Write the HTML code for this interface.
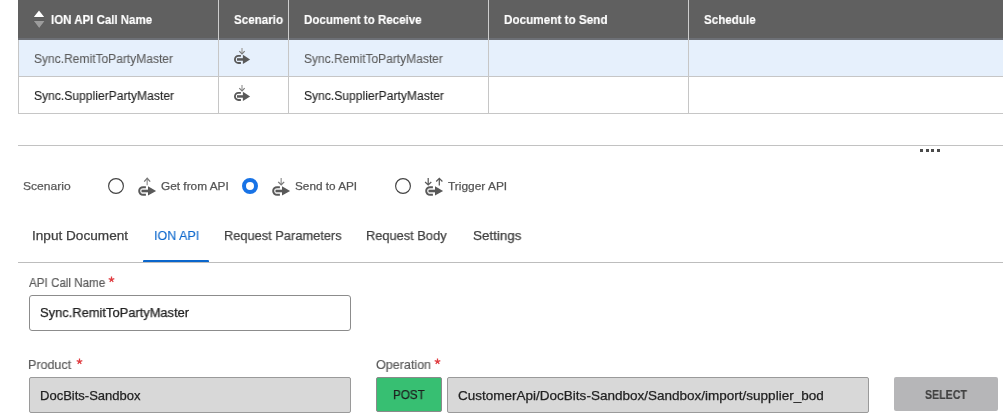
<!DOCTYPE html>
<html><head><meta charset="utf-8">
<style>
html,body{margin:0;padding:0;background:#fff;}
body{width:1003px;height:419px;position:relative;overflow:hidden;font-family:"Liberation Sans",sans-serif;}
.a{position:absolute;}
.t{position:absolute;white-space:nowrap;line-height:20px;transform-origin:0 0;will-change:transform;-webkit-text-stroke:0.3px currentColor;}
.ln{position:absolute;}
</style></head>
<body>


<!-- table header -->
<div class="ln" style="left:18px;top:0;width:985px;height:38px;background:#606060;"></div>
<div class="ln" style="left:18px;top:38px;width:985px;height:2px;background:#6d7076;"></div>
<div class="ln" style="left:218px;top:0;width:1px;height:40px;background:#cdcdcd;"></div>
<div class="ln" style="left:288px;top:0;width:1px;height:40px;background:#cdcdcd;"></div>
<div class="ln" style="left:488px;top:0;width:1px;height:40px;background:#cdcdcd;"></div>
<div class="ln" style="left:688px;top:0;width:1px;height:40px;background:#cdcdcd;"></div>
<svg class="a" style="left:32px;top:9px" width="14" height="20" viewBox="0 0 14 20">
<path d="M1.8 8.1 L7 1.5 L12.2 8.1 Z" fill="#fff" stroke="#555" stroke-width="0.7" paint-order="stroke"/>
<path d="M1.9 12.1 L7.2 19 L12.5 12.1 Z" fill="#9c9c9c" stroke="#555" stroke-width="0.7" paint-order="stroke"/>
</svg>

<!-- rows -->
<div class="ln" style="left:19px;top:40px;width:984px;height:36px;background:#e6f0fc;"></div>
<div class="ln" style="left:18px;top:40px;width:1px;height:74px;background:#c6c6c6;"></div>
<div class="ln" style="left:218px;top:40px;width:1px;height:74px;background:#c6c6c6;"></div>
<div class="ln" style="left:288px;top:40px;width:1px;height:74px;background:#c6c6c6;"></div>
<div class="ln" style="left:488px;top:40px;width:1px;height:74px;background:#c6c6c6;"></div>
<div class="ln" style="left:688px;top:40px;width:1px;height:74px;background:#c6c6c6;"></div>
<div class="ln" style="left:18px;top:76px;width:985px;height:1px;background:#c6c6c6;"></div>
<div class="ln" style="left:18px;top:113px;width:985px;height:1px;background:#c6c6c6;"></div>

<!-- separator + dots -->
<div class="ln" style="left:18px;top:145px;width:985px;height:1px;background:#c2c2c2;"></div>
<div class="ln" style="left:920px;top:149px;width:3px;height:3px;background:#4a4a4a;"></div>
<div class="ln" style="left:926px;top:149px;width:3px;height:3px;background:#4a4a4a;"></div>
<div class="ln" style="left:931px;top:149px;width:3px;height:3px;background:#4a4a4a;"></div>
<div class="ln" style="left:937px;top:149px;width:3px;height:3px;background:#4a4a4a;"></div>

<!-- scenario -->
<svg class="a" style="left:107px;top:177px" width="18" height="18" viewBox="0 0 18 18"><circle cx="9" cy="9" r="7.4" fill="#fff" stroke="#444" stroke-width="1.15"/></svg>
<svg class="a" style="left:241px;top:177px" width="18" height="18" viewBox="0 0 18 18"><circle cx="9" cy="9" r="6" fill="#fff" stroke="#1873e6" stroke-width="4"/></svg>
<svg class="a" style="left:394px;top:177px" width="18" height="18" viewBox="0 0 18 18"><circle cx="9" cy="9" r="7.4" fill="#fff" stroke="#444" stroke-width="1.15"/></svg>

<!-- tabs -->
<div class="ln" style="left:18px;top:262px;width:985px;height:1px;background:#bdbdbd;"></div>
<div class="ln" style="left:143px;top:260px;width:66px;height:2px;background:#0a66cc;border-radius:1px 1px 0 0;"></div>

<!-- form -->
<div class="ln" style="left:29px;top:295px;width:320px;height:34px;border:1px solid #8c8c8c;border-radius:3px;background:#fff;"></div>
<div class="ln" style="left:29px;top:377px;width:320px;height:34px;border:1px solid #9a9a9a;border-radius:2px;background:#d8d8d8;"></div>
<div class="ln" style="left:376px;top:377px;width:64px;height:33px;border:1px solid #8a8a8a;border-radius:2px;background:#37bf72;"></div>
<div class="ln" style="left:447px;top:377px;width:420px;height:34px;border:1px solid #9a9a9a;border-radius:2px;background:#d8d8d8;"></div>
<div class="ln" style="left:894px;top:377px;width:104px;height:34px;border-radius:2px;background:#b6b6b8;"></div>


<svg class="a" style="left:107.6px;top:275.6px" width="7" height="7" viewBox="0 0 7 7"><path d="M3.5 3.55 L3.50 0.60 M3.5 3.55 L6.31 2.64 M3.5 3.55 L5.23 5.94 M3.5 3.55 L1.77 5.94 M3.5 3.55 L0.69 2.64" stroke="#e03c40" stroke-width="1.25" stroke-linecap="butt"/><circle cx="3.5" cy="3.55" r="0.9" fill="#e03c40"/></svg>
<svg class="a" style="left:75.5px;top:357.6px" width="7" height="7" viewBox="0 0 7 7"><path d="M3.5 3.55 L3.50 0.60 M3.5 3.55 L6.31 2.64 M3.5 3.55 L5.23 5.94 M3.5 3.55 L1.77 5.94 M3.5 3.55 L0.69 2.64" stroke="#e03c40" stroke-width="1.25" stroke-linecap="butt"/><circle cx="3.5" cy="3.55" r="0.9" fill="#e03c40"/></svg>
<svg class="a" style="left:433.8px;top:357.6px" width="7" height="7" viewBox="0 0 7 7"><path d="M3.5 3.55 L3.50 0.60 M3.5 3.55 L6.31 2.64 M3.5 3.55 L5.23 5.94 M3.5 3.55 L1.77 5.94 M3.5 3.55 L0.69 2.64" stroke="#e03c40" stroke-width="1.25" stroke-linecap="butt"/><circle cx="3.5" cy="3.55" r="0.9" fill="#e03c40"/></svg>
<svg class="a" style="left:0;top:0" width="1003" height="419" viewBox="0 0 1003 419">
<path d="M240.90 55.93 H238.45 A3.52 3.52 0 0 0 238.45 62.97 H240.90" fill="none" stroke="#595959" stroke-width="1.85"/>
<path d="M237.00 59.45 H243.50" stroke="#595959" stroke-width="2.5"/>
<path d="M242.90 54.80 L250.10 59.45 L242.90 64.00 Z" fill="#595959"/>
<path d="M242.00 48.00 V53.40" stroke="#a8a8a8" stroke-width="1.4"/>
<path d="M239.30 51.10 L242.00 53.80 L244.70 51.10" fill="none" stroke="#7a7a7a" stroke-width="1.2"/>
<path d="M240.90 92.93 H238.45 A3.52 3.52 0 0 0 238.45 99.97 H240.90" fill="none" stroke="#595959" stroke-width="1.85"/>
<path d="M237.00 96.45 H243.50" stroke="#595959" stroke-width="2.5"/>
<path d="M242.90 91.80 L250.10 96.45 L242.90 101.00 Z" fill="#595959"/>
<path d="M242.00 85.00 V90.40" stroke="#a8a8a8" stroke-width="1.4"/>
<path d="M239.30 88.10 L242.00 90.80 L244.70 88.10" fill="none" stroke="#7a7a7a" stroke-width="1.2"/>
<path d="M145.90 187.15 H143.05 A3.85 3.85 0 0 0 143.05 194.85 H145.90" fill="none" stroke="#595959" stroke-width="2.0"/>
<path d="M141.50 191.00 H149.00" stroke="#595959" stroke-width="2.6"/>
<path d="M148.00 186.20 L156.10 191.00 L148.00 195.60 Z" fill="#595959"/>
<path d="M147.20 185.30 V178.60" stroke="#a8a8a8" stroke-width="1.5"/>
<path d="M144.20 181.60 L147.20 178.30 L150.20 181.60" fill="none" stroke="#7a7a7a" stroke-width="1.3"/>
<path d="M279.90 187.15 H277.05 A3.85 3.85 0 0 0 277.05 194.85 H279.90" fill="none" stroke="#595959" stroke-width="2.0"/>
<path d="M275.50 191.00 H283.00" stroke="#595959" stroke-width="2.6"/>
<path d="M282.00 186.20 L290.10 191.00 L282.00 195.60 Z" fill="#595959"/>
<path d="M281.20 177.90 V184.40" stroke="#a8a8a8" stroke-width="1.5"/>
<path d="M278.20 181.90 L281.20 184.80 L284.20 181.90" fill="none" stroke="#7a7a7a" stroke-width="1.3"/>
<path d="M432.90 187.15 H430.05 A3.85 3.85 0 0 0 430.05 194.85 H432.90" fill="none" stroke="#595959" stroke-width="2.0"/>
<path d="M428.50 191.00 H436.00" stroke="#595959" stroke-width="2.6"/>
<path d="M435.00 186.20 L443.10 191.00 L435.00 195.60 Z" fill="#595959"/>
<path d="M428.20 178.00 V184.60 M425.10 182.00 L428.20 184.90 L431.30 182.00" fill="none" stroke="#5a5a5a" stroke-width="1.25"/>
<path d="M439.30 185.50 V178.50 M436.20 181.50 L439.30 178.30 L442.40 181.50" fill="none" stroke="#5a5a5a" stroke-width="1.25"/>
</svg>
<div class="t" id="h1" style="left:51.05px;top:10.32px;font-size:13.23px;font-weight:bold;-webkit-text-stroke:0.15px currentColor;color:#fff;transform:scaleX(0.8690);">ION API Call Name</div>
<div class="t" id="h2" style="left:233.75px;top:10.32px;font-size:13.23px;font-weight:bold;-webkit-text-stroke:0.15px currentColor;color:#fff;transform:scaleX(0.8789);">Scenario</div>
<div class="t" id="h3" style="left:303.75px;top:10.32px;font-size:13.23px;font-weight:bold;-webkit-text-stroke:0.15px currentColor;color:#fff;transform:scaleX(0.8754);">Document to Receive</div>
<div class="t" id="h4" style="left:503.74px;top:10.32px;font-size:13.23px;font-weight:bold;-webkit-text-stroke:0.15px currentColor;color:#fff;transform:scaleX(0.8868);">Document to Send</div>
<div class="t" id="h5" style="left:704.05px;top:10.32px;font-size:13.23px;font-weight:bold;-webkit-text-stroke:0.15px currentColor;color:#fff;transform:scaleX(0.8786);">Schedule</div>
<div class="t" id="r1a" style="left:34.06px;top:49.27px;font-size:12.50px;-webkit-text-stroke:0.1px currentColor;color:#5c5c5c;transform:scaleX(0.9618);">Sync.RemitToPartyMaster</div>
<div class="t" id="r1b" style="left:304.16px;top:49.27px;font-size:12.50px;-webkit-text-stroke:0.1px currentColor;color:#5c5c5c;transform:scaleX(0.9611);">Sync.RemitToPartyMaster</div>
<div class="t" id="r2a" style="left:34.06px;top:86.27px;font-size:12.50px;-webkit-text-stroke:0.1px currentColor;color:#222;transform:scaleX(0.9688);">Sync.SupplierPartyMaster</div>
<div class="t" id="r2b" style="left:304.16px;top:86.27px;font-size:12.50px;-webkit-text-stroke:0.1px currentColor;color:#222;transform:scaleX(0.9681);">Sync.SupplierPartyMaster</div>
<div class="t" id="s0" style="left:22.86px;top:176.47px;font-size:11.63px;-webkit-text-stroke:0.25px currentColor;color:#5a5a5a;transform:scaleX(1.0382);">Scenario</div>
<div class="t" id="s1" style="left:161.41px;top:176.47px;font-size:11.63px;-webkit-text-stroke:0.25px currentColor;color:#555;transform:scaleX(1.0172);">Get from API</div>
<div class="t" id="s2" style="left:295.17px;top:176.47px;font-size:11.63px;-webkit-text-stroke:0.25px currentColor;color:#555;transform:scaleX(1.0113);">Send to API</div>
<div class="t" id="s3" style="left:448.16px;top:176.47px;font-size:11.63px;-webkit-text-stroke:0.25px currentColor;color:#555;transform:scaleX(1.0249);">Trigger API</div>
<div class="t" id="t1" style="left:32.28px;top:226.32px;font-size:13.52px;-webkit-text-stroke:0.25px currentColor;color:#404040;transform:scaleX(1.0066);">Input Document</div>
<div class="t" id="t2" style="left:153.67px;top:226.32px;font-size:13.52px;-webkit-text-stroke:0.12px currentColor;color:#0a66cc;transform:scaleX(0.9274);">ION API</div>
<div class="t" id="t3" style="left:223.87px;top:226.32px;font-size:13.52px;-webkit-text-stroke:0.25px currentColor;color:#404040;transform:scaleX(0.9485);">Request Parameters</div>
<div class="t" id="t4" style="left:366.47px;top:226.32px;font-size:13.52px;-webkit-text-stroke:0.25px currentColor;color:#404040;transform:scaleX(0.9486);">Request Body</div>
<div class="t" id="t5" style="left:473.00px;top:226.32px;font-size:13.52px;-webkit-text-stroke:0.25px currentColor;color:#404040;transform:scaleX(0.9920);">Settings</div>
<div class="t" id="l1" style="left:29.10px;top:273.37px;font-size:12.79px;-webkit-text-stroke:0.2px currentColor;color:#5c5c5c;transform:scaleX(0.9091);">API Call Name</div>
<div class="t" id="i1" style="left:40.22px;top:303.47px;font-size:13.08px;-webkit-text-stroke:0.25px currentColor;color:#222;transform:scaleX(0.9862);">Sync.RemitToPartyMaster</div>
<div class="t" id="l2" style="left:28.40px;top:355.32px;font-size:12.94px;-webkit-text-stroke:0.2px currentColor;color:#5c5c5c;transform:scaleX(0.9663);">Product</div>
<div class="t" id="i2" style="left:39.66px;top:386.22px;font-size:12.94px;-webkit-text-stroke:0.25px currentColor;color:#222;transform:scaleX(1.0054);">DocBits-Sandbox</div>
<div class="t" id="l3" style="left:375.94px;top:355.32px;font-size:12.94px;-webkit-text-stroke:0.2px currentColor;color:#5c5c5c;transform:scaleX(0.9699);">Operation</div>
<div class="t" id="p1" style="left:392.97px;top:385.42px;font-size:12.65px;-webkit-text-stroke:0.25px currentColor;color:#1f1f1f;transform:scaleX(0.9206);">POST</div>
<div class="t" id="i3" style="left:457.72px;top:386.22px;font-size:12.94px;-webkit-text-stroke:0.25px currentColor;color:#222;transform:scaleX(1.0442);">CustomerApi/DocBits-Sandbox/Sandbox/import/supplier_bod</div>
<div class="t" id="b1" style="left:925.18px;top:385.27px;font-size:12.50px;font-weight:bold;-webkit-text-stroke:0.15px currentColor;color:#404040;transform:scaleX(0.8481);">SELECT</div>
</body></html>
